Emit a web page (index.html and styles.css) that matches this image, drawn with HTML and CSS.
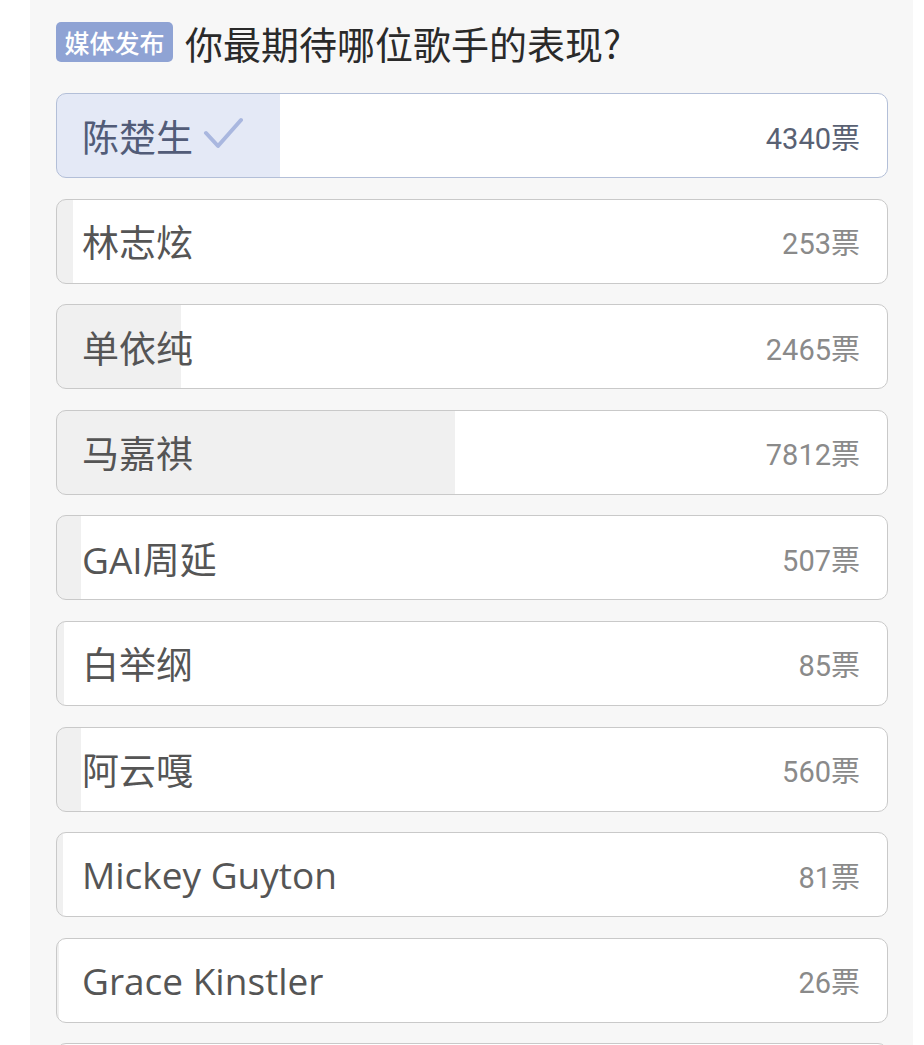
FILE: index.html
```html
<!DOCTYPE html>
<html lang="zh-CN">
<head>
    <meta charset="UTF-8">
    <meta name="viewport" content="width=device-width, initial-scale=1.0">
    <title>投票</title>
    <link rel="stylesheet" href="styles.css">
</head>
<body>
    <div class="panel">
        <div class="title">
            <span class="badge">媒体发布</span>
            <h2>你最期待哪位歌手的表现?</h2>
        </div>
        <div class="options">
            <div class="option selected" style="--p: 26.9%">
                <span class="name">陈楚生
                    <svg class="check" width="40" height="34" viewBox="0 0 40 34"><path d="M3 16 L15 29 L38 3" fill="none" stroke="#a9b7df" stroke-width="4" stroke-linecap="round" stroke-linejoin="round"/></svg>
                </span>
                <span class="count">4340票</span>
            </div>
            <div class="option" style="--p: 1.9%"><span class="name">林志炫</span><span class="count">253票</span></div>
            <div class="option" style="--p: 14.9%"><span class="name">单依纯</span><span class="count">2465票</span></div>
            <div class="option" style="--p: 47.9%"><span class="name">马嘉祺</span><span class="count">7812票</span></div>
            <div class="option" style="--p: 2.9%"><span class="name">GAI周延</span><span class="count">507票</span></div>
            <div class="option" style="--p: 0.8%"><span class="name">白举纲</span><span class="count">85票</span></div>
            <div class="option" style="--p: 2.9%"><span class="name">阿云嘎</span><span class="count">560票</span></div>
            <div class="option" style="--p: 0.7%"><span class="name">Mickey Guyton</span><span class="count">81票</span></div>
            <div class="option" style="--p: 0.2%"><span class="name">Grace Kinstler</span><span class="count">26票</span></div>
            <div class="option" style="--p: 0.5%"></div>
        </div>
    </div>
</body>
</html>
```

FILE: styles.css
```css
body {
    margin: 0;
    background: #fff;
    font-family: Roboto, "Noto Sans CJK SC", sans-serif;
}
.panel {
    margin-left: 30px;
    width: 883px;
    min-height: 1100px;
    box-sizing: border-box;
    padding: 22px 25px 0 26px;
    background: #f7f7f7;
}
.title {
    display: flex;
    align-items: center;
    height: 40px;
}
.badge {
    display: flex;
    align-items: center;
    justify-content: center;
    width: 117px;
    height: 40px;
    border-radius: 5px;
    background: #8fa3d4;
    color: #fff;
    font-family: "Noto Sans CJK SC", sans-serif;
    font-weight: 500;
    font-size: 25px;
}
.title h2 {
    margin: 0 0 0 12px;
    font-family: "Noto Sans CJK SC", sans-serif;
    font-weight: normal;
    font-size: 38px;
    color: #2a2a2a;
}
.options {
    display: flex;
    flex-direction: column;
    gap: 20.6px;
    margin-top: 31px;
}
.option {
    display: flex;
    align-items: center;
    justify-content: space-between;
    height: 85px;
    box-sizing: border-box;
    padding: 0 27px 0 25px;
    border: 1px solid #c9c9c9;
    border-radius: 10px;
    background: linear-gradient(to right, #f0f0f0 var(--p), #fff var(--p));
}
.option.selected {
    border-color: #b3bfd8;
    background: linear-gradient(to right, #e4e9f6 var(--p), #fff var(--p));
}
.name {
    display: flex;
    align-items: center;
    gap: 10px;
    font-family: "Open Sans", "Noto Sans CJK SC", sans-serif;
    font-size: 37px;
    color: #555;
}
.selected .name {
    color: #525c78;
}
.check {
    margin-top: -4px;
}
.count {
    font-size: 29px;
    color: #8a8a8a;
}
.selected .count {
    color: #596173;
}
```
